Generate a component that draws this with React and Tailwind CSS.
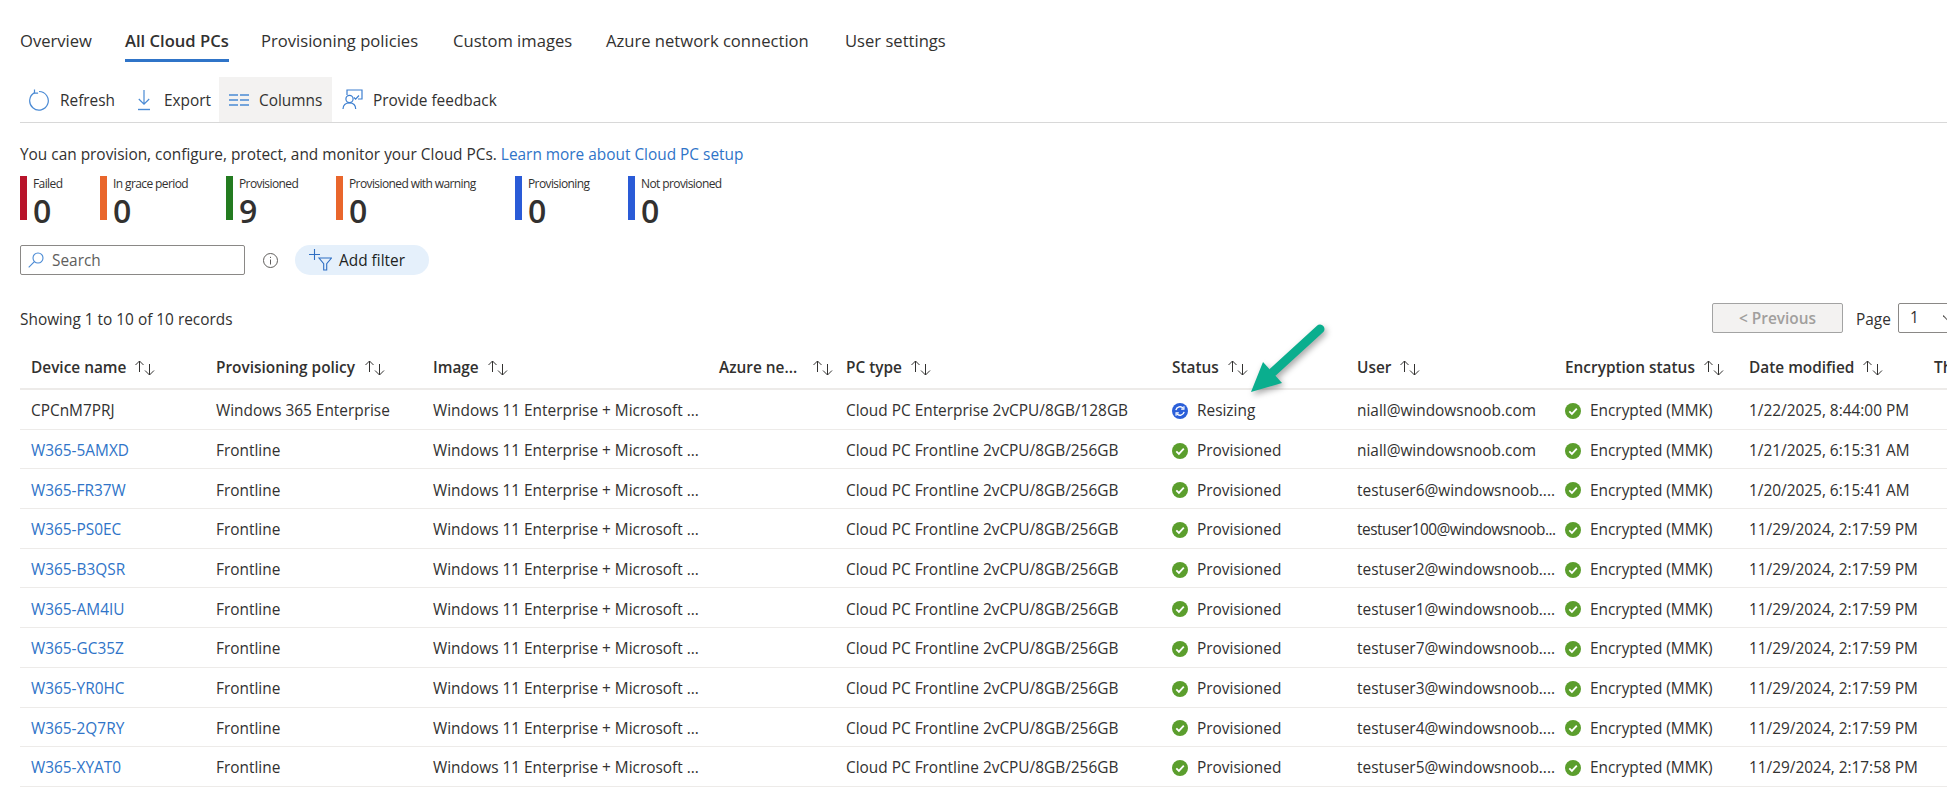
import React from "react";

const tabs = [
  { label: "Overview", cls: "w-[105px]" },
  { label: "All Cloud PCs", cls: "w-[136px]", active: true },
  { label: "Provisioning policies", cls: "w-[192px]" },
  { label: "Custom images", cls: "w-[153px]" },
  { label: "Azure network connection", cls: "w-[239px]" },
  { label: "User settings", cls: "w-[110px]" },
];

const stats = [
  { label: "Failed", value: 0, bar: "bg-[#b8142b]", cls: "w-[80px]" },
  { label: "In grace period", value: 0, bar: "bg-[#e9662c]", cls: "w-[126px]" },
  { label: "Provisioned", value: 9, bar: "bg-[#237b20]", cls: "w-[110px]" },
  { label: "Provisioned with warning", value: 0, bar: "bg-[#e9662c]", cls: "w-[179px]" },
  { label: "Provisioning", value: 0, bar: "bg-[#2a5bd7]", cls: "w-[113px]" },
  { label: "Not provisioned", value: 0, bar: "bg-[#2a5bd7]", cls: "w-[120px]" },
];

const columns = [
  { label: "Device name", cls: "w-[185px] gap-2" },
  { label: "Provisioning policy", cls: "w-[217px] gap-[9px]" },
  { label: "Image", cls: "w-[286px] gap-2" },
  { label: "Azure ne...", cls: "w-[127px] gap-[15px]" },
  { label: "PC type", cls: "w-[326px] gap-2" },
  { label: "Status", cls: "w-[185px] gap-2" },
  { label: "User", cls: "w-[208px] gap-2" },
  { label: "Encryption status", cls: "w-[184px] gap-2" },
  { label: "Date modified", cls: "w-[185px] gap-2" },
  { label: "Thumbnail", cls: "w-[120px]", noSort: true },
];

const image = "Windows 11 Enterprise + Microsoft ...";
const frontline = "Cloud PC Frontline 2vCPU/8GB/256GB";

const rows = [
  { name: "CPCnM7PRJ", policy: "Windows 365 Enterprise", type: "Cloud PC Enterprise 2vCPU/8GB/128GB", status: "Resizing", user: "niall@windowsnoob.com", date: "1/22/2025, 8:44:00 PM" },
  { name: "W365-5AMXD", policy: "Frontline", type: frontline, status: "Provisioned", user: "niall@windowsnoob.com", date: "1/21/2025, 6:15:31 AM" },
  { name: "W365-FR37W", policy: "Frontline", type: frontline, status: "Provisioned", user: "testuser6@windowsnoob....", date: "1/20/2025, 6:15:41 AM" },
  { name: "W365-PS0EC", policy: "Frontline", type: frontline, status: "Provisioned", user: "testuser100@windowsnoob...", date: "11/29/2024, 2:17:59 PM", tight: true },
  { name: "W365-B3QSR", policy: "Frontline", type: frontline, status: "Provisioned", user: "testuser2@windowsnoob....", date: "11/29/2024, 2:17:59 PM" },
  { name: "W365-AM4IU", policy: "Frontline", type: frontline, status: "Provisioned", user: "testuser1@windowsnoob....", date: "11/29/2024, 2:17:59 PM" },
  { name: "W365-GC35Z", policy: "Frontline", type: frontline, status: "Provisioned", user: "testuser7@windowsnoob....", date: "11/29/2024, 2:17:59 PM" },
  { name: "W365-YR0HC", policy: "Frontline", type: frontline, status: "Provisioned", user: "testuser3@windowsnoob....", date: "11/29/2024, 2:17:59 PM" },
  { name: "W365-2Q7RY", policy: "Frontline", type: frontline, status: "Provisioned", user: "testuser4@windowsnoob....", date: "11/29/2024, 2:17:59 PM" },
  { name: "W365-XYAT0", policy: "Frontline", type: frontline, status: "Provisioned", user: "testuser5@windowsnoob....", date: "11/29/2024, 2:17:58 PM" },
];

const SortIcon = () => (
  <svg width="21" height="16" viewBox="0 0 21 16" fill="none" stroke="#323130" strokeWidth="1" className="shrink-0">
    <path d="M5.5 12V1M1.5 5l4-4 4 4" />
    <path d="M15.5 4v11M11 10.5l4.5 4.5 4.5-4.5" />
  </svg>
);

const CheckIcon = () => (
  <svg width="16" height="16" viewBox="0 0 16 16" className="shrink-0">
    <circle cx="8" cy="8" r="8" fill="#5b9e2d" />
    <path d="M4.3 8.3l2.6 2.6L11.8 5.6" fill="none" stroke="#fff" strokeWidth="1.8" />
  </svg>
);

const SyncIcon = () => (
  <svg width="16" height="16" viewBox="0 0 15 15" className="shrink-0">
    <circle cx="7.5" cy="7.5" r="7.5" fill="#2b5fd9" />
    <path d="M3.6 6.6a4 4 0 0 1 6.9-1.7M11.4 8.4a4 4 0 0 1-6.9 1.7" fill="none" stroke="#fff" strokeWidth="1.3" />
    <path d="M11.2 3v2.7H8.6M3.8 12V9.3h2.6" fill="none" stroke="#fff" strokeWidth="1.1" />
  </svg>
);

const RefreshIcon = () => (
  <svg width="22" height="22" viewBox="0 0 22 22" fill="none" stroke="#4a8ad4" strokeWidth="1.2" className="shrink-0">
    <path d="M6.6 3.6a9.3 9.3 0 1 0 4.4-1.1" />
    <path d="M6.5 0.5v3.6h3.6" />
  </svg>
);

const ExportIcon = () => (
  <svg width="14" height="22" viewBox="0 0 14 22" fill="none" stroke="#4a8ad4" strokeWidth="1.2" className="shrink-0">
    <path d="M7 1v14M1.8 10l5.2 5.2L12.2 10" />
    <path d="M1 20.5h12" strokeWidth="1.4" />
  </svg>
);

const ColumnsIcon = () => (
  <svg width="20" height="12" viewBox="0 0 20 12" fill="none" stroke="#4a8ad4" strokeWidth="1.4" className="shrink-0">
    <path d="M0 1h9M11 1h9M0 6h9M11 6h9M0 11h9M11 11h9" />
  </svg>
);

const FeedbackIcon = () => (
  <svg width="21" height="21" viewBox="0 0 21 21" fill="none" stroke="#3d7fd0" strokeWidth="1.2" className="shrink-0">
    <path d="M5 6V1h15v9h-4" />
    <path d="M12 8.5l1.6 1.6L17 6.5" />
    <circle cx="7.5" cy="10" r="3.6" />
    <path d="M1 20c0-3.6 2.6-6.2 6.5-6.2s6.2 2.4 6.2 6.2" />
  </svg>
);

const SearchIcon = () => (
  <svg width="16" height="16" viewBox="0 0 16 16" fill="none" stroke="#4a8ad4" strokeWidth="1.1" className="shrink-0">
    <circle cx="10" cy="6" r="5" />
    <path d="M6.4 9.6L0.7 15.3" />
  </svg>
);

const InfoIcon = () => (
  <svg width="15" height="15" viewBox="0 0 15 15" fill="none" stroke="#605e5c" strokeWidth="1">
    <circle cx="7.5" cy="7.5" r="7" />
    <path d="M7.5 6.5v5M7.5 3.8v1.2" />
  </svg>
);

const AddFilterIcon = () => (
  <svg width="23" height="22" viewBox="0 0 23 22" fill="none" stroke="#2f6fc4" strokeWidth="1.1" className="shrink-0">
    <path d="M5.5 0v11M0 5.5h11" />
    <path d="M10 9h12.5l-4.8 5.6V21h-3v-6.4z" />
  </svg>
);

const Arrow = () => (
  <svg
    width="90"
    height="80"
    viewBox="0 0 90 80"
    className="absolute left-[1242px] top-[322px] drop-shadow-[2px_3px_3px_rgba(0,0,0,0.35)]"
  >
    <path d="M78 7L31 50" fill="none" stroke="#0aae8e" strokeWidth="9" strokeLinecap="round" />
    <path d="M9 70L21 40L40 61z" fill="#0aae8e" />
  </svg>
);

const ToolButton = ({ icon, label, cls }) => (
  <button className={`flex items-center h-[45px] text-[#323130] ${cls}`}>
    {icon}
    <span className="pt-[3px]">{label}</span>
  </button>
);

const App = () => {
  return (
    <div className="relative w-full h-screen overflow-hidden bg-white text-[#323130] font-['Open_Sans',sans-serif] text-[15.4px]">
      <div className="pl-5 pt-7">
        <nav className="flex text-[16.6px] h-[34px]">
          {tabs.map((tab) => (
            <div key={tab.label} className={`${tab.cls} shrink-0`}>
              <span className={`inline-block h-[34px] leading-[26px] whitespace-nowrap ${tab.active ? "border-b-[3px] border-[#2f74c8] font-semibold" : ""}`}>
                {tab.label}
              </span>
            </div>
          ))}
        </nav>

        <div className="flex mt-[15px] border-b border-[#d8d8d8] h-[46px]">
          <ToolButton icon={<RefreshIcon />} label="Refresh" cls="w-[117px] pl-2 gap-2.5" />
          <ToolButton icon={<ExportIcon />} label="Export" cls="w-[82px] gap-[13px]" />
          <ToolButton icon={<ColumnsIcon />} label="Columns" cls="w-[113px] bg-[#f3f2f1] pl-2.5 gap-2.5" />
          <ToolButton icon={<FeedbackIcon />} label="Provide feedback" cls="pl-2.5 gap-2.5" />
        </div>

        <p className="mt-[22px] leading-5">
          You can provision, configure, protect, and monitor your Cloud PCs.{" "}
          <a className="text-[#2f74c8]">Learn more about Cloud PC setup</a>
        </p>

        <div className="flex mt-[11px] h-11">
          {stats.map((s) => (
            <div key={s.label} className={`flex shrink-0 gap-[6px] ${s.cls}`}>
              <div className={`w-[7px] h-11 ${s.bar}`} />
              <div>
                <div className="text-[12px] leading-[15px] tracking-[-0.6px] whitespace-nowrap">{s.label}</div>
                <div className="text-[32px] leading-[32px] mt-1 font-semibold">{s.value}</div>
              </div>
            </div>
          ))}
        </div>

        <div className="flex items-center mt-[25px] h-[30px]">
          <div className="flex items-center w-[225px] h-[30px] border border-[#8a8886] rounded-[2px] pl-[7px] gap-2 text-[#605e5c]">
            <SearchIcon />
            <span className="pt-px">Search</span>
          </div>
          <div className="ml-[18px] flex"><InfoIcon /></div>
          <button className="flex items-center ml-[17px] w-[134px] h-[30px] rounded-full bg-[#e5f0fb] pl-[14px] gap-[7px]">
            <AddFilterIcon />
            <span className="text-[#201f1e] pt-px">Add filter</span>
          </button>
        </div>

        <div className="flex items-center mt-[28px] h-[30px]">
          <span className="w-[1692px] shrink-0 pt-[3px]">Showing 1 to 10 of 10 records</span>
          <button className="w-[131px] h-[30px] shrink-0 border border-[#a3a3a3] rounded-[2px] bg-[#f3f2f1] text-[#a19f9d] font-semibold pt-px">
            &lt; Previous
          </button>
          <span className="ml-[13px] w-[42px] shrink-0 pt-[3px]">Page</span>
          <div className="flex justify-between items-center w-[90px] h-[30px] shrink-0 border border-[#8a8886] rounded-[2px] pl-[11px] pr-[38px]">
            <span>1</span>
            <svg width="6" height="8" viewBox="0 0 6 8" fill="none" stroke="#605e5c" strokeWidth="1.1" className="shrink-0">
              <path d="M0 1.5l5 5" />
            </svg>
          </div>
        </div>

        <div className="mt-[15px] w-[1947px]">
          <div className="flex h-[42px] items-center border-b-2 border-[#edebe9] font-semibold">
            {columns.map((c) => (
              <div key={c.label} className={`flex items-center shrink-0 pl-[11px] whitespace-nowrap ${c.cls}`}>
                <span>{c.label}</span>
                {!c.noSort && <SortIcon />}
              </div>
            ))}
          </div>
          {rows.map((r) => (
            <div key={r.name} className="flex h-[39.7px] pt-[3px] items-center border-b border-[#edebe9] whitespace-nowrap">
              <div className="w-[185px] shrink-0 pl-[11px]">
                {r.name.startsWith("W365") ? <a className="text-[#2f74c8]">{r.name}</a> : r.name}
              </div>
              <div className="w-[217px] shrink-0 pl-[11px]">{r.policy}</div>
              <div className="w-[286px] shrink-0 pl-[11px]">{image}</div>
              <div className="w-[127px] shrink-0" />
              <div className="w-[326px] shrink-0 pl-[11px]">{r.type}</div>
              <div className="w-[185px] shrink-0 pl-[11px] flex items-center gap-[9px]">
                {r.status === "Resizing" ? <SyncIcon /> : <CheckIcon />}
                <span>{r.status}</span>
              </div>
              <div className={`w-[208px] shrink-0 pl-[11px] ${r.tight ? "tracking-[-0.5px]" : ""}`}>{r.user}</div>
              <div className="w-[184px] shrink-0 pl-[11px] flex items-center gap-[9px]">
                <CheckIcon />
                <span>Encrypted (MMK)</span>
              </div>
              <div className="w-[185px] shrink-0 pl-[11px]">{r.date}</div>
            </div>
          ))}
        </div>
      </div>
      <Arrow />
    </div>
  );
};

export default App;
